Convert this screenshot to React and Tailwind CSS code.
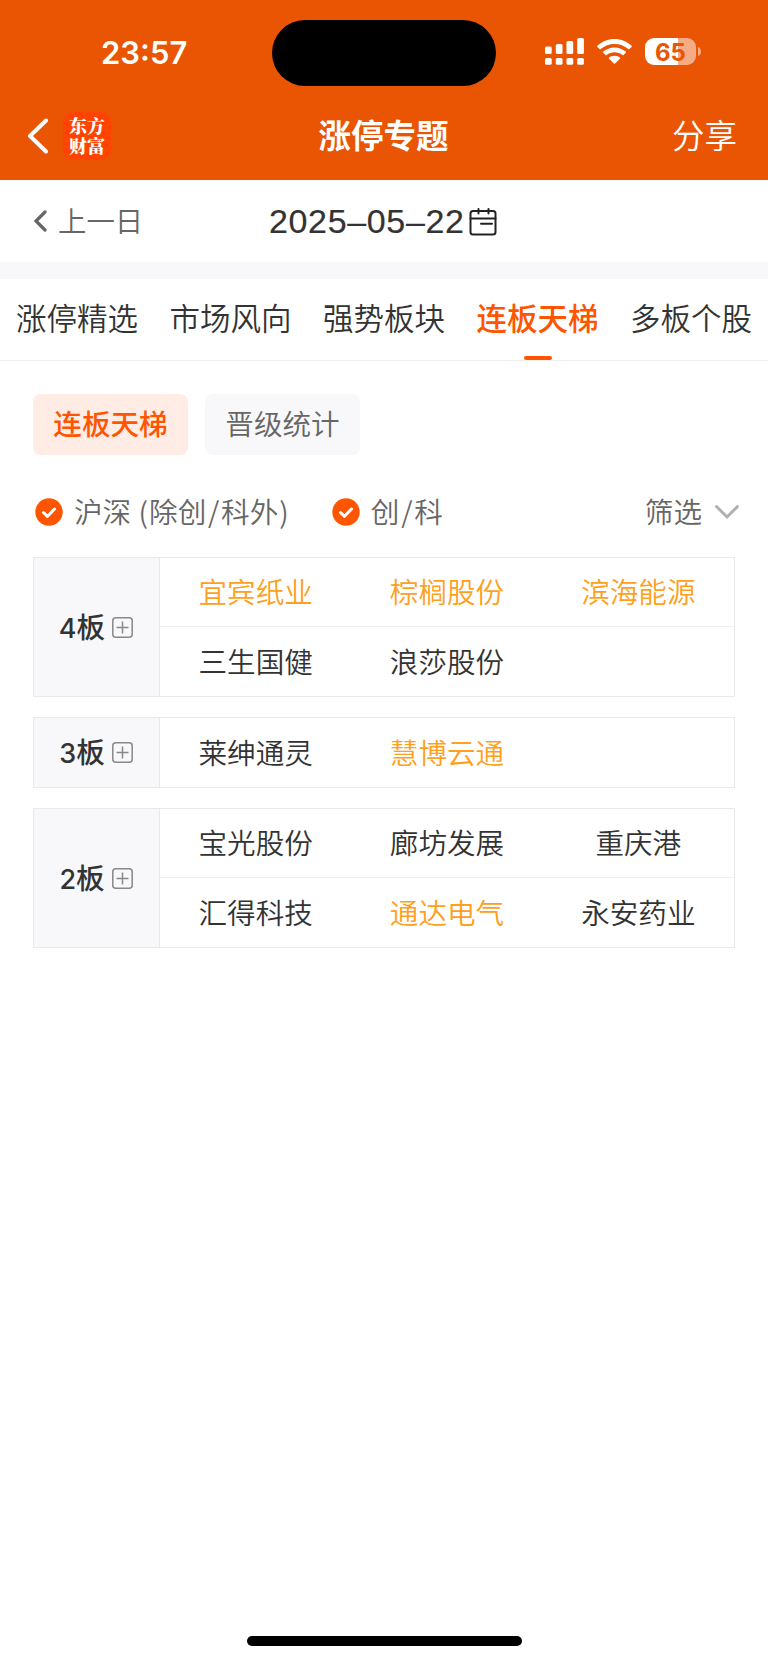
import { useState } from "react";
import clsx from "clsx";

const tabs = ["涨停精选", "市场风向", "强势板块", "连板天梯", "多板个股"];

const modes = ["连板天梯", "晋级统计"];

// stocks grouped by number of consecutive limit-up days
const groups = [
   {
      label: "4",
      rows: [
         [
            { name: "宜宾纸业", hot: true },
            { name: "棕榈股份", hot: true },
            { name: "滨海能源", hot: true },
         ],
         [{ name: "三生国健" }, { name: "浪莎股份" }],
      ],
   },
   {
      label: "3",
      rows: [[{ name: "莱绅通灵" }, { name: "慧博云通", hot: true }]],
   },
   {
      label: "2",
      rows: [
         [{ name: "宝光股份" }, { name: "廊坊发展" }, { name: "重庆港" }],
         [{ name: "汇得科技" }, { name: "通达电气", hot: true }, { name: "永安药业" }],
      ],
   },
];

function SignalIcon() {
   return (
      <svg className="w-[39px] h-[27px]" viewBox="0 0 39 27" fill="#fff">
         <rect x="0" y="8.500" width="6.700" height="7.500" rx="1.600" />
         <rect x="10.800" y="6" width="6.700" height="10" rx="1.600" />
         <rect x="21.500" y="3" width="6.700" height="13" rx="1.600" />
         <rect x="32.200" y="0" width="6.700" height="16" rx="1.600" />
         <rect x="0" y="20" width="6.700" height="6.800" rx="1.600" />
         <rect x="10.800" y="20" width="6.700" height="6.800" rx="1.600" />
         <rect x="21.500" y="20" width="6.700" height="6.800" rx="1.600" />
         <rect x="32.200" y="20" width="6.700" height="6.800" rx="1.600" />
      </svg>
   );
}

function WifiIcon() {
   return (
      <svg className="w-[35px] h-[25px]" viewBox="0 0 35 25" fill="#fff">
         <path d="M17.500 0C24 0 30 2.500 34.600 6.700Q35.200 7.300 34.600 7.900L32.400 10.100Q31.900 10.600 31.300 10.100C27.500 6.800 22.700 5 17.500 5S7.500 6.800 3.700 10.100Q3.100 10.600 2.600 10.100L.4 7.900Q-.2 7.300.4 6.700C5 2.500 11 0 17.500 0Z" />
         <path d="M17.500 8.400C21.800 8.400 25.700 10 28.800 12.600Q29.400 13.200 28.800 13.800L26.500 16Q26 16.500 25.400 16C23.200 14.200 20.500 13.200 17.500 13.200S11.800 14.200 9.600 16Q9 16.500 8.500 16L6.200 13.800Q5.600 13.200 6.200 12.600C9.300 10 13.200 8.400 17.500 8.400Z" />
         <path d="M17.500 16.700C19.600 16.700 21.400 17.400 22.900 18.600Q23.500 19.200 22.900 19.800L18.100 24.500Q17.500 25 16.900 24.500L12.100 19.800Q11.500 19.200 12.100 18.600C13.600 17.400 15.400 16.700 17.500 16.700Z" />
      </svg>
   );
}

function Battery() {
   return (
      <div className="flex items-center gap-[2px]">
         <div className="w-[51px] h-[27px] rounded-[9px] bg-[linear-gradient(90deg,#fff_65%,#f5ab83_65%)] text-center font-['Inter',sans-serif] font-bold text-[24px] leading-[29px] text-[#ea5504]">
            65
         </div>
         <svg className="w-[3px] h-[9px]" viewBox="0 0 3 9">
            <path d="M0 0C4 1.500 4 7.500 0 9Z" fill="#f5ab83" />
         </svg>
      </div>
   );
}

function StatusBar() {
   return (
      <div className="flex h-[86px] pt-[20px]">
         <div className="w-[272px] pl-[101px] pt-[13px] font-['Inter',sans-serif] font-semibold text-[31px] leading-[40px]">
            23:57
         </div>
         <div className="w-[224px] h-[66px] rounded-full bg-black" />
         <div className="flex items-center h-[27px] mt-[18px] ml-[49px]">
            <SignalIcon />
            <div className="ml-[13px] mr-[13px]">
               <WifiIcon />
            </div>
            <Battery />
         </div>
      </div>
   );
}

function NavBar() {
   return (
      <div className="grid grid-cols-3 items-center h-[94px] pl-[27px] pr-[31px]">
         <div className="flex items-center pt-[5px]">
            <svg className="w-[22px] h-[36px]" viewBox="0 0 22 36" fill="none">
               <path
                  d="M19 2.500L3 18L19 33.500"
                  stroke="#fff"
                  strokeWidth="4"
                  strokeLinecap="round"
                  strokeLinejoin="round"
               />
            </svg>
            <div className="ml-[14px] w-[48px] h-[48px] pt-[3px] rounded-[10px] bg-[#ff4400] text-center font-['Noto_Serif_CJK_SC','Noto_Sans_CJK_SC',serif] font-black text-[18px] leading-[20px]">
               东方
               <br />
               财富
            </div>
         </div>
         <h1 className="pl-[3px] pt-[2px] text-center font-bold text-[32.500px] leading-[40px] whitespace-nowrap">
            涨停专题
         </h1>
         <button className="justify-self-end pt-[2px] font-[350] text-[32.500px] leading-[40px]">分享</button>
      </div>
   );
}

function DateBar() {
   return (
      <div className="grid grid-cols-[235px_1fr_235px] items-center h-[82px] px-[33px] bg-white">
         <button className="flex items-center gap-[10px] font-[350] text-[28.400px] leading-[40px] text-[#666]">
            <svg className="w-[15px] h-[22px]" viewBox="0 0 15 22" fill="none">
               <path d="M12 2L3 11L12 20" stroke="#666" strokeWidth="3.200" strokeLinecap="round" />
            </svg>
            <span className="pb-[2px]">上一日</span>
         </button>
         <div className="flex items-center gap-[4px] pl-[1px]">
            <span className="pb-[1px] font-['Liberation_Sans',Arial,sans-serif] text-[34px] tracking-[0.650px] leading-[40px] text-[#333] [-webkit-text-stroke:0.2px_#333]">
               2025–05–22
            </span>
            <svg
               className="w-[28px] h-[28px] mt-[1px] shrink-0"
               viewBox="0 0 28 28"
               fill="none"
               stroke="#222"
               strokeWidth="2"
            >
               <rect x="1.500" y="3" width="25" height="23.500" rx="2.500" />
               <path d="M1.500 10.500H26.500M9.500 1V5.500M19.500 1V5.500M12 15.700H23" strokeLinecap="round" />
            </svg>
         </div>
      </div>
   );
}

function Tabs({ active, onChange }) {
   return (
      <div className="flex justify-between h-[82px] px-[16px] border-b border-[#eeeeef]">
         {tabs.map((tab) => (
            <button
               key={tab}
               className={clsx(
                  "relative pb-[4px] text-[30.500px] leading-[77px] whitespace-nowrap",
                  tab === active ? "font-medium text-[#ff5500]" : "font-[350] text-[#333]"
               )}
               onClick={() => onChange(tab)}
            >
               {tab}
               {tab === active && (
                  <span className="absolute bottom-0 left-1/2 -translate-x-1/2 w-[28px] h-[4px] rounded-full bg-[#ff5500]" />
               )}
            </button>
         ))}
      </div>
   );
}

function CheckOption({ children, checked, onToggle }) {
   return (
      <button className="flex items-center gap-[11px]" onClick={onToggle}>
         <svg className="w-[28px] h-[28px]" viewBox="0 0 28 28" fill="none">
            <circle cx="14" cy="14" r="13.700" fill={checked ? "#ff5500" : "#ccc"} />
            <path
               d="M8.500 14.500L12.500 18.300L19.500 11"
               stroke="#fff"
               strokeWidth="3"
               strokeLinecap="round"
               strokeLinejoin="round"
            />
         </svg>
         <span className="pb-[2px]">{children}</span>
      </button>
   );
}

function StockGroup({ group }) {
   return (
      <div className="flex border border-[#e9e9eb]">
         <div className="flex items-center justify-center gap-[7px] w-[126px] pr-[1px] bg-[#f8f8fb] border-r border-[#e9e9eb]">
            <span className="font-medium text-[28.600px] leading-[40px] text-[#333]">
               <span className="font-['Inter',sans-serif] font-medium text-[27px]">{group.label}</span>板
            </span>
            <svg className="w-[21px] h-[21px]" viewBox="0 0 21 21" fill="none" stroke="#888">
               <rect x="0.800" y="0.800" width="19.400" height="19.400" rx="3" strokeWidth="1.500" />
               <path d="M4.500 10.500H16.500M10.500 4.500V16.500" strokeWidth="1.500" />
            </svg>
         </div>
         <div className="flex-1 divide-y divide-[#f0f0f1]">
            {group.rows.map((row, i) => (
               <div key={i} className="grid grid-cols-3 items-center h-[69px] pb-[2px]">
                  {row.map((stock) => (
                     <span
                        key={stock.name}
                        className={clsx(
                           "text-center font-[350] text-[28.600px] leading-[40px]",
                           stock.hot ? "text-[#ff9f20]" : "text-[#333]"
                        )}
                     >
                        {stock.name}
                     </span>
                  ))}
               </div>
            ))}
         </div>
      </div>
   );
}

function App() {
   const [activeTab, setActiveTab] = useState("连板天梯");
   const [mode, setMode] = useState("连板天梯");
   const [mainBoard, setMainBoard] = useState(true);
   const [growthBoard, setGrowthBoard] = useState(true);

   return (
      <div className="flex flex-col w-[768px] h-[1663px] overflow-hidden bg-white font-['Noto_Sans_CJK_SC',sans-serif]">
         <header className="h-[180px] shrink-0 bg-[#ea5504] text-white">
            <StatusBar />
            <NavBar />
         </header>
         <DateBar />
         <div className="h-[17px] bg-[#f8f8fb]" />
         <Tabs active={activeTab} onChange={setActiveTab} />

         <main className="flex-1 px-[33px] pt-[33px]">
            <div className="flex gap-[17px]">
               {modes.map((item) => (
                  <button
                     key={item}
                     className={clsx(
                        "w-[155px] h-[61px] pb-[3px] rounded-[8px] text-[28.600px] leading-[40px]",
                        item === mode
                           ? "bg-[#ffece5] font-medium text-[#ff5500]"
                           : "bg-[#f8f8fb] font-[350] text-[#666]"
                     )}
                     onClick={() => setMode(item)}
                  >
                     {item}
                  </button>
               ))}
            </div>

            {/* board filters */}
            <div className="flex items-center h-[102px] pt-[11px] pl-[2px] font-[350] text-[28.600px] leading-[40px] text-[#666]">
               <CheckOption checked={mainBoard} onToggle={() => setMainBoard(!mainBoard)}>
                  沪深 <span className="px-[1px]">(</span>除创<span className="px-[1.800px]">/</span>科外
                  <span className="px-[1px]">)</span>
               </CheckOption>
               <div className="ml-[42px]">
                  <CheckOption checked={growthBoard} onToggle={() => setGrowthBoard(!growthBoard)}>
                     创<span className="px-[1.800px]">/</span>科
                  </CheckOption>
               </div>
               <button className="flex items-center gap-[12px] ml-auto -mr-[5px]">
                  <span className="pb-[2px]">筛选</span>
                  <svg className="w-[26px] h-[16px]" viewBox="0 0 26 16" fill="none">
                     <path d="M2.500 2.500L13 13L23.500 2.500" stroke="#b0b0b0" strokeWidth="3" strokeLinecap="round" />
                  </svg>
               </button>
            </div>

            <div className="flex flex-col gap-[20px]">
               {groups.map((group) => (
                  <StockGroup key={group.label} group={group} />
               ))}
            </div>
         </main>

         {/* home indicator */}
         <div className="w-[275px] h-[10px] mx-auto mb-[17px] rounded-full bg-black" />
      </div>
   );
}

export default App;
